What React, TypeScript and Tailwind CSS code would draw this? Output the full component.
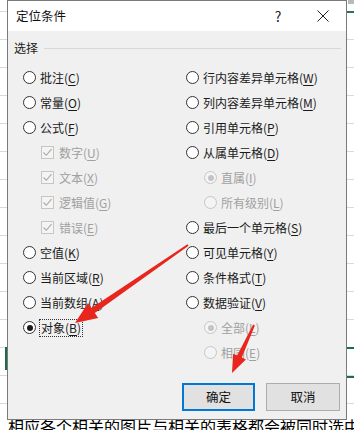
import type { ReactNode } from 'react'

type Item = {
  label: string
  hotkey: string
  kind: 'radio' | 'check' | 'sub'
  checked?: boolean
  disabled?: boolean
  focus?: boolean
}

const leftItems: Item[] = [
  { label: '批注', hotkey: 'C', kind: 'radio' },
  { label: '常量', hotkey: 'O', kind: 'radio' },
  { label: '公式', hotkey: 'F', kind: 'radio' },
  { label: '数字', hotkey: 'U', kind: 'check', checked: true, disabled: true },
  { label: '文本', hotkey: 'X', kind: 'check', checked: true, disabled: true },
  { label: '逻辑值', hotkey: 'G', kind: 'check', checked: true, disabled: true },
  { label: '错误', hotkey: 'E', kind: 'check', checked: true, disabled: true },
  { label: '空值', hotkey: 'K', kind: 'radio' },
  { label: '当前区域', hotkey: 'R', kind: 'radio' },
  { label: '当前数组', hotkey: 'A', kind: 'radio' },
  { label: '对象', hotkey: 'B', kind: 'radio', checked: true, focus: true },
]

const rightItems: Item[] = [
  { label: '行内容差异单元格', hotkey: 'W', kind: 'radio' },
  { label: '列内容差异单元格', hotkey: 'M', kind: 'radio' },
  { label: '引用单元格', hotkey: 'P', kind: 'radio' },
  { label: '从属单元格', hotkey: 'D', kind: 'radio' },
  { label: '直属', hotkey: 'I', kind: 'sub', checked: true, disabled: true },
  { label: '所有级别', hotkey: 'L', kind: 'sub', disabled: true },
  { label: '最后一个单元格', hotkey: 'S', kind: 'radio' },
  { label: '可见单元格', hotkey: 'Y', kind: 'radio' },
  { label: '条件格式', hotkey: 'T', kind: 'radio' },
  { label: '数据验证', hotkey: 'V', kind: 'radio' },
  { label: '全部', hotkey: 'L', kind: 'sub', checked: true, disabled: true },
  { label: '相同', hotkey: 'E', kind: 'sub', disabled: true },
]

function RadioDot({ checked, disabled }: { checked?: boolean; disabled?: boolean }) {
  return (
    <span
      className={`flex h-[13px] w-[13px] shrink-0 items-center justify-center rounded-full border ${
        disabled ? 'border-[#c6c6c6] bg-[#f4f4f4]' : 'border-[#333333] bg-white'
      }`}
    >
      {checked && (
        <span className={`h-[6px] w-[6px] rounded-full ${disabled ? 'bg-[#c4c4c4]' : 'bg-[#1a1a1a]'}`} />
      )}
    </span>
  )
}

function CheckBox() {
  return (
    <span className="flex h-[13px] w-[13px] shrink-0 items-center justify-center border border-[#c6c6c6] bg-[#f4f4f4]">
      <svg width="11" height="11" viewBox="0 0 11 11" fill="none">
        <path d="M1.5 5.5 L4.3 8.3 L9.5 2.2" stroke="#a8a8a8" strokeWidth="1.1" />
      </svg>
    </span>
  )
}

function Label({ item }: { item: Item }) {
  const text: ReactNode = (
    <>
      {item.label}(<span className="underline underline-offset-[2px]">{item.hotkey}</span>)
    </>
  )
  return (
    <span
      className={`whitespace-nowrap ${item.disabled ? 'text-[#a0a0a0]' : 'text-[#1a1a1a]'} ${
        item.focus ? 'outline outline-1 outline-dotted outline-[#333] px-[1px]' : ''
      }`}
    >
      {text}
    </span>
  )
}

function Row({ item }: { item: Item }) {
  return (
    <div className="flex h-[25px] items-center">
      {item.kind === 'radio' && (
        <div className="flex items-center gap-[4px]">
          <RadioDot checked={item.checked} />
          <Label item={item} />
        </div>
      )}
      {item.kind === 'check' && (
        <div className="ml-[18px] flex items-center gap-[5px]">
          <CheckBox />
          <Label item={item} />
        </div>
      )}
      {item.kind === 'sub' && (
        <div className="ml-[18px] flex items-center gap-[4px]">
          <RadioDot checked={item.checked} disabled />
          <Label item={item} />
        </div>
      )}
    </div>
  )
}

function Arrows() {
  return (
    <svg className="pointer-events-none absolute left-0 top-0" width="354" height="430" viewBox="0 0 354 430">
      <polygon
        fill="#e8261e"
        points="188.6,245.8 94.8,313 98.2,317.9 75,323 88,303.1 91.4,308 187.4,244.2"
      />
      <polygon
        fill="#e8261e"
        points="254.9,325.4 241.8,357.6 245.9,359.5 232,373 233.1,353.7 237.2,355.6 253.1,324.6"
      />
    </svg>
  )
}

export default function App() {
  const gridRows = Array.from({ length: 14 })

  return (
    <div className="relative h-[430px] w-[354px] overflow-hidden bg-white font-['Noto_Sans_CJK_SC',sans-serif]">
      {/* spreadsheet behind the dialog */}
      <div className="flex flex-col">
        <div className="h-[12px] border-b border-[#d9d9d9]" />
        {gridRows.map((_, i) => (
          <div key={i} className="h-[28px] border-b border-[#d9d9d9]" />
        ))}
        <p className="mt-[10px] whitespace-nowrap pl-[8px] text-[16px] leading-[24px] text-black">
          相应各个相关的图片与相关的表格都会被同时选中，然后再一起删除
        </p>
      </div>
      <div className="absolute right-0 top-0 h-[4px] w-[6px] bg-[#b9b9b9]" />
      <div className="absolute right-0 top-[11px] h-[2px] w-[7px] bg-[#2f6d5e]" />
      <div className="absolute right-0 top-[347px] h-[2px] w-[7px] bg-[#1f6b47]" />
      <div className="absolute right-0 top-[376px] h-[2px] w-[7px] bg-[#1f6b47]" />
      <div className="absolute left-[5px] top-[347px] h-[23px] w-[2px] bg-[#1f6b47]" />

      {/* dialog window */}
      <div className="absolute left-[7px] top-0 flex h-[420px] w-[340px] flex-col border border-[#7a7a7a] bg-[#f0f0f0] text-[12px] leading-[16px]">
        <div className="flex h-[30px] items-center justify-between bg-white pl-[8px] pr-[13px]">
          <span className="text-[12.5px] text-[#111]">定位条件</span>
          <div className="flex items-center gap-[25px]">
            <span className="flex w-[20px] justify-center text-[14px] text-[#222]">?</span>
            <span className="flex w-[20px] justify-center">
              <svg width="12" height="12" viewBox="0 0 12 12">
                <path d="M0.5 0.5 L11.5 11.5 M11.5 0.5 L0.5 11.5" stroke="#222" strokeWidth="1" />
              </svg>
            </span>
          </div>
        </div>

        <div className="flex items-center pl-[6px] pr-[5px] pt-[9px]">
          <span className="text-[#1a1a1a]">选择</span>
          <div className="ml-[6px] h-px flex-1 bg-[#d8d8d8]" />
        </div>

        <div className="mt-[9px] flex pl-[15px]">
          <div className="flex w-[163px] flex-col">
            {leftItems.map((item) => (
              <Row key={item.label} item={item} />
            ))}
          </div>
          <div className="flex flex-col">
            {rightItems.map((item) => (
              <Row key={item.label} item={item} />
            ))}
          </div>
        </div>

        <div className="mt-[18px] flex justify-end gap-[11px] pr-[6px]">
          <button className="flex h-[28px] w-[73px] items-center justify-center border-2 border-[#0078d7] bg-[#e1e1e1] text-[12.5px] text-[#111]">
            确定
          </button>
          <button className="flex h-[28px] w-[74px] items-center justify-center border border-[#adadad] bg-[#e1e1e1] text-[12.5px] text-[#111]">
            取消
          </button>
        </div>
      </div>

      <Arrows />
    </div>
  )
}
